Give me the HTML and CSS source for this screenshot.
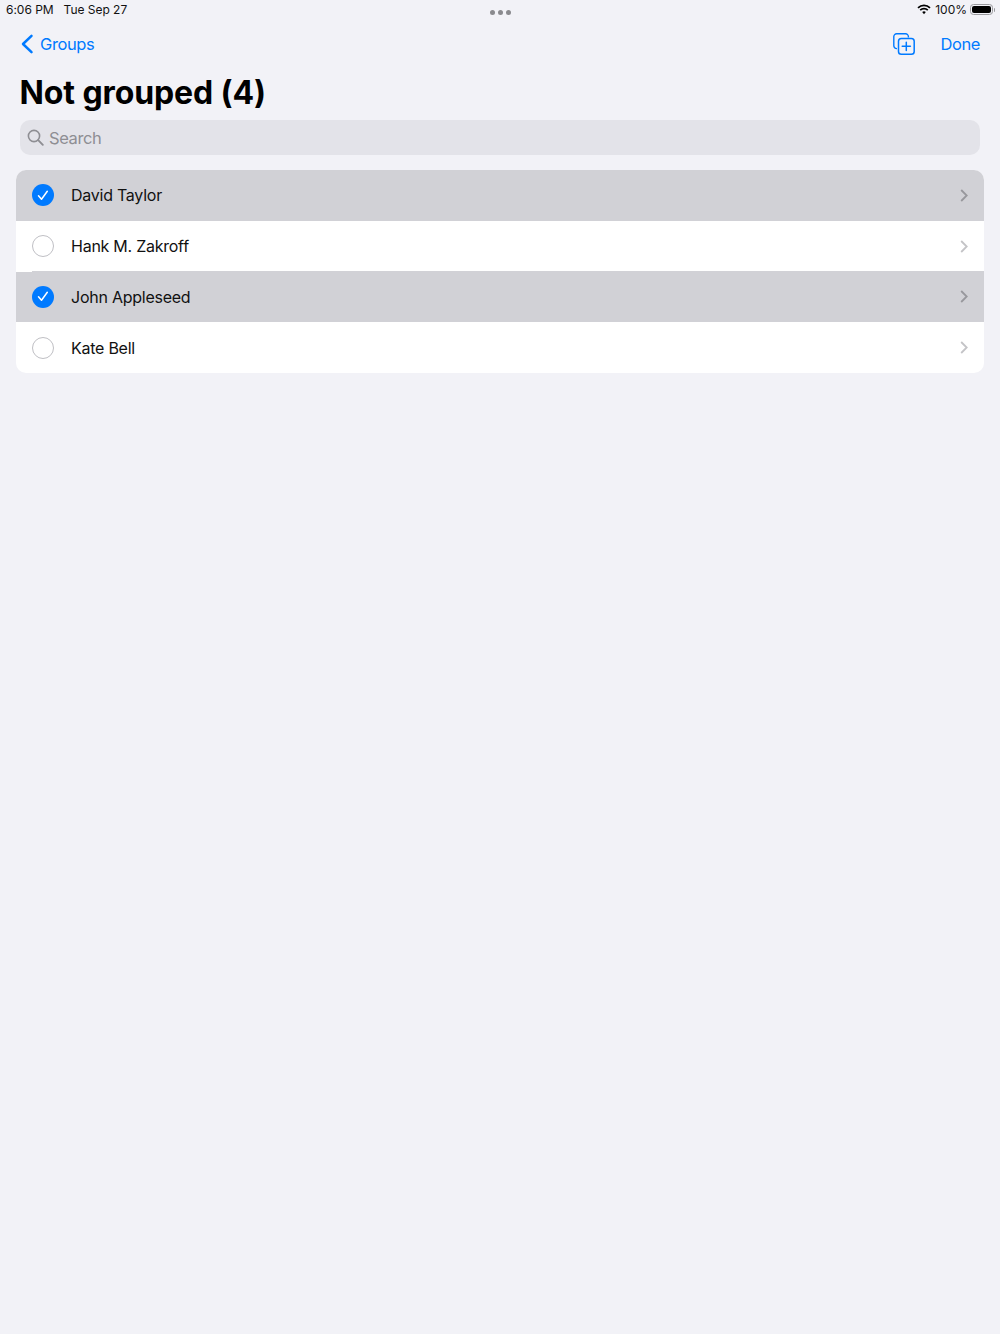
FILE: index.html
```html
<!DOCTYPE html>
<html lang="en">
<head>
    <meta charset="UTF-8">
    <meta name="viewport" content="width=device-width, initial-scale=1.0">
    <title>Not grouped</title>
    <link rel="stylesheet" href="styles.css">
</head>
<body>
    <div class="status-bar">
        <div class="status-time"><span>6:06 PM</span><span>Tue Sep 27</span></div>
        <div class="status-dots"><i></i><i></i><i></i></div>
        <div class="status-right">
            <svg class="wifi" width="14" height="11" viewBox="0 0 14 11">
                <path d="M1 3.9a8.6 8.6 0 0 1 12 0" fill="none" stroke="#000" stroke-width="1.7"/>
                <path d="M3.2 6.1a5.4 5.4 0 0 1 7.6 0" fill="none" stroke="#000" stroke-width="1.7"/>
                <path d="M5.2 8.1a2.6 2.6 0 0 1 3.6 0L7 10.2z" fill="#000"/>
            </svg>
            <span>100%</span>
            <div class="battery"><div class="battery-fill"></div></div>
            <div class="battery-cap"></div>
        </div>
    </div>

    <div class="nav-bar">
        <a class="back-link">
            <svg width="14" height="20" viewBox="0 0 14 20">
                <path d="M11.5 1.8 3 10l8.500 8.200" fill="none" stroke="#007aff" stroke-width="2.500" stroke-linecap="round" stroke-linejoin="round"/>
            </svg>
            <span>Groups</span>
        </a>
        <div class="nav-actions">
            <svg width="22" height="22" viewBox="0 0 22 22">
                <path d="M4 15.600H3.600a2.800 2.800 0 0 1-2.800-2.800V3.600A2.800 2.800 0 0 1 3.600.8h9a2.800 2.800 0 0 1 2.800 2.800v.9" fill="none" stroke="#007aff" stroke-width="1.400"/>
                <rect x="5.500" y="5.500" width="15.700" height="15.700" rx="2.800" fill="none" stroke="#007aff" stroke-width="1.500"/>
                <path d="M13.300 9.200v8.200M9.200 13.300h8.200" fill="none" stroke="#007aff" stroke-width="1.500" stroke-linecap="round"/>
            </svg>
            <a class="done">Done</a>
        </div>
    </div>

    <h1 class="page-title">Not grouped (4)</h1>

    <div class="search-box">
        <svg width="17" height="17" viewBox="0 0 17 17">
            <circle cx="7" cy="7" r="5.600" fill="none" stroke="#8e8e93" stroke-width="1.600"/>
            <path d="M11.200 11.200 15.800 15.800" stroke="#8e8e93" stroke-width="1.900" stroke-linecap="round"/>
        </svg>
        <span>Search</span>
    </div>

    <ul class="contact-list">
        <li class="contact-row selected">
            <span class="check">
                <svg width="12" height="11" viewBox="0 0 12 11"><path d="M1.500 5.800 4.500 9.300 10.300 1.300" fill="none" stroke="#fff" stroke-width="1.500" stroke-linecap="round" stroke-linejoin="round"/></svg>
            </span>
            <span class="contact-name">David Taylor</span>
            <svg class="chevron" width="8" height="13" viewBox="0 0 8 13"><path d="M1.200 1 6.700 6.500 1.200 12" fill="none" stroke-width="1.800"/></svg>
        </li>
        <li class="contact-row">
            <span class="check"></span>
            <span class="contact-name">Hank M. Zakroff</span>
            <svg class="chevron" width="8" height="13" viewBox="0 0 8 13"><path d="M1.200 1 6.700 6.500 1.200 12" fill="none" stroke-width="1.800"/></svg>
        </li>
        <li class="contact-row selected">
            <span class="check">
                <svg width="12" height="11" viewBox="0 0 12 11"><path d="M1.500 5.800 4.500 9.300 10.300 1.300" fill="none" stroke="#fff" stroke-width="1.500" stroke-linecap="round" stroke-linejoin="round"/></svg>
            </span>
            <span class="contact-name">John Appleseed</span>
            <svg class="chevron" width="8" height="13" viewBox="0 0 8 13"><path d="M1.200 1 6.700 6.500 1.200 12" fill="none" stroke-width="1.800"/></svg>
        </li>
        <li class="contact-row">
            <span class="check"></span>
            <span class="contact-name">Kate Bell</span>
            <svg class="chevron" width="8" height="13" viewBox="0 0 8 13"><path d="M1.200 1 6.700 6.500 1.200 12" fill="none" stroke-width="1.800"/></svg>
        </li>
    </ul>
</body>
</html>
```

FILE: styles.css
```css
* {
    box-sizing: border-box;
}
html, body {
    height: 100%;
}
body {
    margin: 0;
    background: #f2f2f7;
    color: #000;
    font-family: Inter, "Liberation Sans", sans-serif;
    overflow: hidden;
}
.status-bar {
    position: relative;
    display: flex;
    justify-content: space-between;
    align-items: center;
    height: 20px;
    padding: 0 6px 1px;
    font-size: 12px;
    color: #111;
}
.status-time {
    display: flex;
    gap: 10px;
    letter-spacing: -0.030px;
}
.status-dots {
    position: absolute;
    left: 490px;
    top: 10px;
    display: flex;
    gap: 3px;
}
.status-dots i {
    width: 5px;
    height: 5px;
    border-radius: 50%;
    background: #8a8a8e;
}
.status-right {
    display: flex;
    align-items: center;
}
.wifi {
    margin-right: 4px;
}
.battery {
    width: 23px;
    height: 11px;
    margin-left: 3px;
    padding: 1px;
    border: 1px solid #9a9a9e;
    border-radius: 3.500px;
}
.battery-fill {
    height: 100%;
    background: #000;
    border-radius: 2px;
}
.battery-cap {
    width: 1.500px;
    height: 4px;
    margin-left: 0.500px;
    margin-right: -1px;
    background: #9a9a9e;
    border-radius: 0 1px 1px 0;
}
.nav-bar {
    display: flex;
    justify-content: space-between;
    align-items: center;
    height: 48px;
    padding: 0 20px;
    font-size: 16.500px;
    letter-spacing: -0.400px;
    color: #007aff;
}
.back-link {
    display: flex;
    align-items: center;
    gap: 6px;
}
.nav-actions {
    display: flex;
    align-items: center;
    gap: 25px;
}
.page-title {
    margin: 0;
    padding: 0 19.500px;
    height: 52px;
    font-size: 32px;
    font-weight: 700;
    line-height: 49px;
    letter-spacing: -0.100px;
}
.search-box {
    display: flex;
    align-items: center;
    gap: 5px;
    height: 35px;
    margin: 0 20px;
    padding: 0 7px;
    background: #e3e3e9;
    border-radius: 10px;
    font-size: 16.500px;
    letter-spacing: -0.400px;
    color: #8e8e93;
}
.contact-list {
    display: flex;
    flex-direction: column;
    margin: 15px 16px 0;
    padding: 0;
    list-style: none;
    background: #fff;
    border-radius: 10px;
    overflow: hidden;
}
.contact-row {
    position: relative;
    display: flex;
    align-items: center;
    height: 50.700px;
    padding: 0.200px 16px 0;
    font-size: 16px;
    letter-spacing: -0.250px;
    color: #111;
}
.contact-row.selected {
    background: #d1d1d6;
}
/* white sliver where the separator inset stops */
.contact-row + .contact-row.selected::before {
    content: "";
    position: absolute;
    top: 0;
    left: 0;
    width: 16px;
    height: 1px;
    background: #fff;
}
.check {
    display: flex;
    align-items: center;
    justify-content: center;
    width: 22px;
    height: 22px;
    border: 1.800px solid #bfbfc4;
    border-radius: 50%;
}
.selected .check {
    background: #007aff;
    border: none;
}
.contact-name {
    flex: 1;
    margin-left: 17px;
}
.chevron {
    margin-right: 0.500px;
    stroke: #c4c4c7;
}
.selected .chevron {
    stroke: #98989d;
}
```
